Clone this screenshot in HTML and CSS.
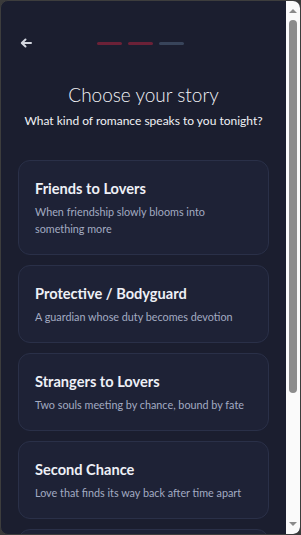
FILE: index.html
```html
<!DOCTYPE html>
<html>
<head>
    <meta charset="UTF-8">
    <meta name="viewport" content="width=device-width, initial-scale=1.0">
    <title>Choose your story</title>
    <link rel="stylesheet" href="styles.css">
</head>
<body>
    <div class="frame">
        <main class="screen">
            <header class="topbar">
                <button class="back" aria-label="Back">
                    <svg width="12" height="10" viewBox="0 0 12 10">
                        <path d="M11 5H2.5M5.5 1.5L1.8 5l3.7 3.5" fill="none" stroke="#d4d7e0" stroke-width="2" stroke-linecap="round" stroke-linejoin="round"/>
                    </svg>
                </button>
                <div class="steps">
                    <span class="step done"></span>
                    <span class="step done"></span>
                    <span class="step"></span>
                </div>
                <span class="spacer"></span>
            </header>
            <section class="intro">
                <h1>Choose your story</h1>
                <p>What kind of romance speaks to you tonight?</p>
            </section>
            <ul class="stories">
                <li class="story">
                    <h2>Friends to Lovers</h2>
                    <p>When friendship slowly blooms into something more</p>
                </li>
                <li class="story">
                    <h2>Protective / Bodyguard</h2>
                    <p>A guardian whose duty becomes devotion</p>
                </li>
                <li class="story">
                    <h2>Strangers to Lovers</h2>
                    <p>Two souls meeting by chance, bound by fate</p>
                </li>
                <li class="story">
                    <h2>Second Chance</h2>
                    <p>Love that finds its way back after time apart</p>
                </li>
                <li class="story next"></li>
            </ul>
        </main>
        <div class="scrollbar">
            <span class="arrow up"></span>
            <div class="track"><div class="thumb"></div></div>
            <span class="arrow down"></span>
        </div>
    </div>
</body>
</html>
```

FILE: styles.css
```css
html, body {
    margin: 0;
    height: 100%;
    background: #3a3a3a;
}
body {
    font-family: Lato, "Liberation Sans", sans-serif;
    color: #eef0f5;
}
.frame {
    box-sizing: border-box;
    width: 301px;
    height: 535px;
    border: 1px solid #3d3d3d;
    border-radius: 8px;
    overflow: hidden;
    display: flex;
    background: #1b1e2f;
}
.screen {
    flex: 1;
    overflow: hidden;
    padding: 32px 17px 0 17px;
}
.topbar {
    display: flex;
    align-items: center;
    height: 20px;
}
.back {
    width: 20px;
    height: 20px;
    padding: 0 0 0 2px;
    border: none;
    background: none;
    display: flex;
    align-items: center;
}
.spacer {
    width: 20px;
}
.steps {
    flex: 1;
    display: flex;
    justify-content: center;
    gap: 6px;
    margin-right: 7px;
}
.step {
    width: 25px;
    height: 3px;
    border-radius: 2px;
    background: #38445a;
}
.step.done {
    background: #6b2137;
}
.intro {
    text-align: center;
    margin-top: 29px;
}
.intro h1 {
    margin: 0;
    font-size: 19px;
    font-weight: 300;
    line-height: 26px;
    color: #f2f3f7;
}
.intro p {
    margin: 4px 0 0;
    font-size: 12px;
    line-height: 18px;
    white-space: nowrap;
    color: #f0f1f5;
}
.stories {
    list-style: none;
    margin: 30px 0 0;
    padding: 0;
    display: flex;
    flex-direction: column;
    gap: 10px;
}
.story {
    background: #1e2236;
    border: 1px solid #2a3048;
    border-radius: 12px;
    padding: 18px 16px 17px;
}
.story.next {
    min-height: 40px;
}
.story h2 {
    margin: 0;
    font-size: 14.6px;
    font-weight: 700;
    line-height: 20px;
    color: #eef0f6;
}
.story p {
    margin: 4px 0 0;
    font-size: 10.8px;
    line-height: 17px;
    color: #a3abc2;
}
.scrollbar {
    width: 14px;
    background: #fafafa;
    display: flex;
    flex-direction: column;
    align-items: center;
    border-radius: 0 0 6px 0;
}
.arrow {
    width: 0;
    height: 0;
    border-left: 4px solid transparent;
    border-right: 4px solid transparent;
}
.arrow.up {
    margin-top: 8px;
    border-bottom: 4px solid #8a8a8a;
}
.arrow.down {
    margin-bottom: 8px;
    border-top: 4px solid #8a8a8a;
}
.track {
    flex: 1;
    width: 100%;
    display: flex;
    justify-content: center;
    padding-top: 7px;
}
.thumb {
    width: 8px;
    height: 373px;
    border-radius: 4px;
    background: #8c8c8c;
}
```
